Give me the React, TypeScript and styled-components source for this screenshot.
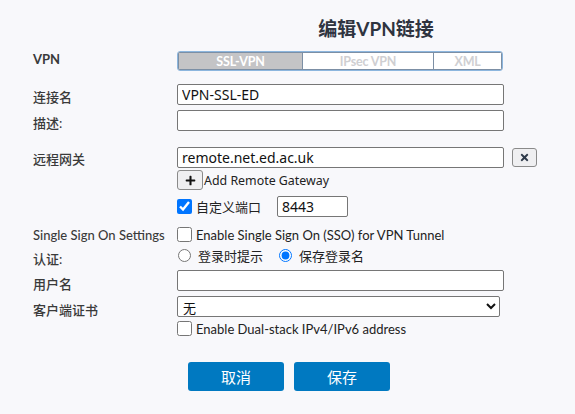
import React from "react";
import styled, { createGlobalStyle } from "styled-components";
import { FaPlus, FaTimes } from "react-icons/fa";

const Global = createGlobalStyle`
  html, body { margin: 0; padding: 0; background: #f8f8fb; }
  body { font-family: Lato, "Noto Sans CJK SC", sans-serif; color: #333; }
  * { box-sizing: border-box; }
`;

const Page = styled.div`
  width: 575px;
  height: 414px;
  background: #f8f8fb;
  display: flex;
  flex-direction: column;
`;

const Row = styled.div<{ $mt?: number; $h?: number }>`
  display: grid;
  grid-template-columns: 144px 1fr;
  padding-left: 33px;
  margin-top: ${(p) => p.$mt ?? 0}px;
  min-height: ${(p) => p.$h ?? 20}px;
  align-items: center;
`;

const Title = styled.h1`
  grid-column: 2;
  margin: 0;
  text-align: center;
  font-family: Lato, "Noto Sans CJK SC", sans-serif;
  font-weight: 700;
  font-size: 19px;
  line-height: 30px;
  color: #2f3440;
`;

const Label = styled.div<{ $dy?: number; $bold?: boolean }>`
  font-family: Lato, "Noto Sans CJK SC", sans-serif;
  font-size: 13px;
  font-weight: ${(p) => (p.$bold ? 700 : 500)};
  color: #3a3a3a;
  position: relative;
  top: ${(p) => p.$dy ?? 0}px;
  white-space: nowrap;
`;

const Field = styled.div`
  display: flex;
  align-items: center;
  min-width: 0;
`;

const Segments = styled.div`
  display: flex;
  width: 326px;
  height: 20px;
  border: 1px solid #8cb6de;
  border-radius: 3px;
  overflow: hidden;
  background: #fff;
`;

const Segment = styled.div<{ $active?: boolean; $w: number }>`
  width: ${(p) => p.$w}px;
  height: 100%;
  display: flex;
  align-items: center;
  justify-content: center;
  border: 1px solid #7c8fa5;
  border-left-width: 0;
  &:first-child { border-left-width: 1px; }
  background: ${(p) => (p.$active ? "#c4c4c6" : "#fff")};
  color: ${(p) => (p.$active ? "#fff" : "#cfcfd2")};
  font-family: Lato, sans-serif;
  font-weight: 700;
  font-size: 12.5px;
  letter-spacing: -0.2px;
`;

const TextInput = styled.input<{ $w?: number }>`
  width: ${(p) => p.$w ?? 327}px;
  height: 21px;
  border: 1px solid #767676;
  border-radius: 2px;
  background: #fff;
  padding: 0 4px;
  font-family: "Noto Sans", sans-serif;
  font-size: 14px;
  color: #111;
  outline: none;
`;

const IconButton = styled.button<{ $w: number; $h: number }>`
  width: ${(p) => p.$w}px;
  height: ${(p) => p.$h}px;
  padding: 0;
  display: inline-flex;
  align-items: center;
  justify-content: center;
  background: #efeff1;
  border: 1px solid #8a8a8a;
  border-radius: 3px;
  color: #111;
`;

const RemoveButton = styled(IconButton)`
  margin-left: 8px;
  color: #2e3a4a;
`;

const AddText = styled.span`
  font-family: "Noto Sans", sans-serif;
  font-size: 12.4px;
  color: #222;
  margin-left: 1px;
`;

const Check = styled.input`
  width: 15px;
  height: 15px;
  margin: 0 4px 0 0;
  flex: none;
`;

const Radio = styled.input`
  width: 13px;
  height: 13px;
  margin: 0 7px 0 1px;
  flex: none;
`;

const OptText = styled.span<{ $mr?: number }>`
  font-family: Lato, "Noto Sans CJK SC", sans-serif;
  font-size: 13px;
  color: #222;
  margin-right: ${(p) => p.$mr ?? 0}px;
  white-space: nowrap;
`;

const Select = styled.select`
  width: 323px;
  height: 21px;
  border: 1px solid #767676;
  border-radius: 2px;
  background: #fff;
  padding: 0 1px;
  font-family: "Noto Sans CJK SC", sans-serif;
  font-size: 13px;
  color: #111;
  outline: none;
`;

const Actions = styled.div`
  display: flex;
  justify-content: center;
  gap: 10px;
  margin-top: 25px;
  padding-left: 3px;
`;

const PrimaryButton = styled.button`
  width: 96px;
  height: 29px;
  border: none;
  border-radius: 3px;
  background: #0079c1;
  color: #fff;
  font-family: "Noto Sans CJK SC", sans-serif;
  font-size: 15px;
`;

export default function App() {
  return (
    <Page>
      <Global />
      <Row $mt={14} $h={30}>
        <div />
        <Title>编辑VPN链接</Title>
      </Row>
      <Row $mt={7} $h={20}>
        <Label $bold $dy={-2}>VPN</Label>
        <Field>
          <Segments>
            <Segment $active $w={125}>SSL-VPN</Segment>
            <Segment $w={131}>IPsec VPN</Segment>
            <Segment $w={68}>XML</Segment>
          </Segments>
        </Field>
      </Row>
      <Row $mt={13} $h={21}>
        <Label $dy={2}>连接名</Label>
        <Field>
          <TextInput defaultValue="VPN-SSL-ED" />
        </Field>
      </Row>
      <Row $mt={5} $h={21}>
        <Label $dy={2}>描述:</Label>
        <Field>
          <TextInput defaultValue="" />
        </Field>
      </Row>
      <Row $mt={16} $h={21}>
        <Label $dy={1}>远程网关</Label>
        <Field>
          <TextInput defaultValue="remote.net.ed.ac.uk" />
          <RemoveButton $w={25} $h={19}>
            <FaTimes size={11} />
          </RemoveButton>
        </Field>
      </Row>
      <Row $mt={2} $h={20}>
        <div />
        <Field>
          <IconButton $w={26} $h={20}>
            <FaPlus size={11} />
          </IconButton>
          <AddText>Add Remote Gateway</AddText>
        </Field>
      </Row>
      <Row $mt={6} $h={21}>
        <div />
        <Field>
          <Check type="checkbox" defaultChecked />
          <OptText $mr={16}>自定义端口</OptText>
          <TextInput $w={71} defaultValue="8443" />
        </Field>
      </Row>
      <Row $mt={9} $h={17}>
        <Label>Single Sign On Settings</Label>
        <Field>
          <Check type="checkbox" />
          <OptText>Enable Single Sign On (SSO) for VPN Tunnel</OptText>
        </Field>
      </Row>
      <Row $mt={3} $h={19}>
        <Label $dy={3}>认证:</Label>
        <Field>
          <Radio type="radio" name="auth" />
          <OptText $mr={15}>登录时提示</OptText>
          <Radio type="radio" name="auth" defaultChecked />
          <OptText>保存登录名</OptText>
        </Field>
      </Row>
      <Row $mt={5} $h={21}>
        <Label $dy={3}>用户名</Label>
        <Field>
          <TextInput defaultValue="" />
        </Field>
      </Row>
      <Row $mt={5} $h={21}>
        <Label $dy={3}>客户端证书</Label>
        <Field>
          <Select defaultValue="none">
            <option value="none">无</option>
          </Select>
        </Field>
      </Row>
      <Row $mt={3} $h={17}>
        <div />
        <Field>
          <Check type="checkbox" />
          <OptText>Enable Dual-stack IPv4/IPv6 address</OptText>
        </Field>
      </Row>
      <Actions>
        <PrimaryButton>取消</PrimaryButton>
        <PrimaryButton>保存</PrimaryButton>
      </Actions>
    </Page>
  );
}
